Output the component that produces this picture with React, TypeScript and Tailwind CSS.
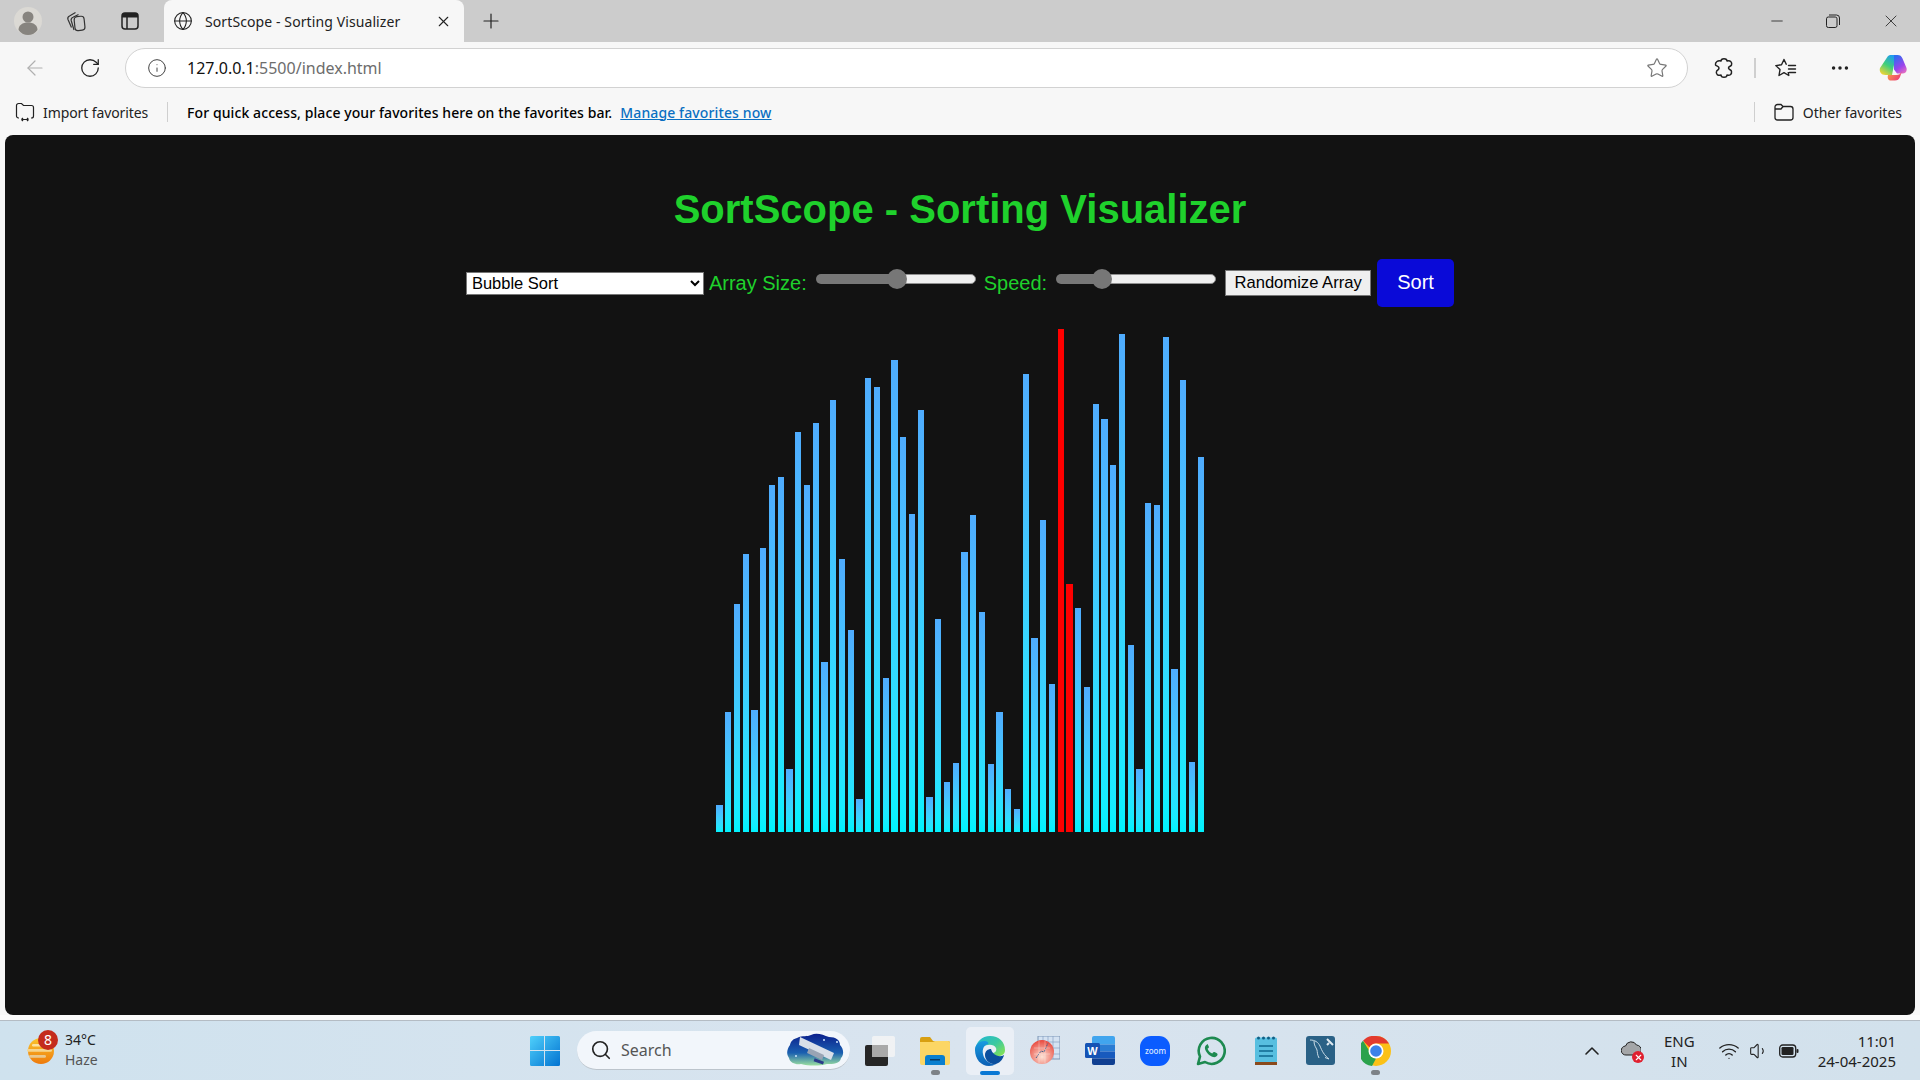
import React from 'react';
import {
  ArrowLeft,
  ChevronUp,
  Ellipsis,
  Globe,
  Info,
  Minus,
  Plus,
  RotateCw,
  Search,
  Star,
  Volume1,
  Wifi,
  X,
} from 'lucide-react';

const chromeFont = { fontFamily: '"Noto Sans", sans-serif' };

// bar heights in px, measured from the baseline
const bars: number[] = [
  27, 120, 228, 278, 122, 284, 347, 355, 63, 400, 347, 409, 170, 432, 273, 202, 33, 454, 445, 154, 472, 395, 318, 422, 35, 213, 50,
  69, 280, 317, 220, 68, 120, 43, 23, 458, 194, 312, 148, 503, 248, 224, 145, 428, 413, 367, 498, 187, 63, 329, 327, 495, 163, 452, 70,
  375,
];
const redBars = [39, 40];

function Slider({ width, fill }: { width: number; fill: number }) {
  return (
    <div className="relative mb-[9px] flex h-[10px] shrink-0 overflow-visible" style={{ width }}>
      <div className="h-full rounded-l-[5px] bg-[#777777]" style={{ width: fill }} />
      <div className="h-full flex-1 rounded-r-[5px] border border-[#8f8f8f] bg-[#efefef]" />
      <div className="absolute top-[-5px] h-[20px] w-[20px] rounded-full bg-[#777777]" style={{ left: fill - 10 }} />
    </div>
  );
}

function Avatar() {
  return (
    <svg width="28" height="28" viewBox="0 0 28 28">
      <circle cx="14" cy="14" r="14" fill="#dbd9d4" />
      <circle cx="14" cy="10" r="5.5" fill="#87847f" />
      <path d="M4.5 23c0-5 4-7.5 9.500-7.500s9.500 2.500 9.500 7.500c-2 3-5.500 5-9.500 5s-7.500-2-9.500-5z" fill="#87847f" />
    </svg>
  );
}

function CollectionsIcon() {
  return (
    <svg width="22" height="22" viewBox="0 0 22 22" fill="none" stroke="#333" strokeWidth="1.200">
      <rect x="9.500" y="6.500" width="10" height="14" rx="3" transform="rotate(-6 14 13)" />
      <path d="M9 20 6.200 10.500c-.4-1.500.3-2.500 1.800-3.200l5.500-2.800" />
      <path d="M6.500 17.500 3 9.500c-.6-1.600 0-2.800 1.500-3.500L10.500 2.500" />
    </svg>
  );
}

function VerticalTabsIcon() {
  return (
    <svg width="20" height="20" viewBox="0 0 20 20" fill="none">
      <rect x="2" y="2" width="16" height="16" rx="3" stroke="#222" strokeWidth="1.500" />
      <path d="M2 5a3 3 0 0 1 3-3h10a3 3 0 0 1 3 3v1.500H2z" fill="#222" />
      <path d="M7 6v12" stroke="#222" strokeWidth="1.500" />
    </svg>
  );
}

function RestoreIcon() {
  return (
    <svg width="14" height="14" viewBox="0 0 14 14" fill="none" stroke="#222" strokeWidth="1">
      <rect x="0.500" y="3" width="10.500" height="10.500" rx="1.800" />
      <path d="M3 1h7.500A3 3 0 0 1 13.500 4v7" />
    </svg>
  );
}

function ExtensionsIcon() {
  return (
    <svg width="20" height="22" viewBox="0 0 20 22" fill="none" stroke="#222" strokeWidth="1.500" strokeLinejoin="round">
      <path d="M7 4c0-3 6-3 6 0 3-1 5.500 1 4.500 4-.5 1.500-3 1-3 3s3 1.500 3 3.500c.5 3-2 4.500-4.500 3.500 0 3-6 3-6 0-3 1-5.500-1-4.500-3.500.5-1.500 2.500-1.500 2.500-3.500S2 9 1.500 8C1 5 4 3 7 4z" />
    </svg>
  );
}

function FavoritesIcon() {
  return (
    <svg width="22" height="20" viewBox="0 0 22 20" fill="none" stroke="#222" strokeWidth="1.400" strokeLinejoin="round">
      <path d="M11.500 6.800 9 1.500 6.500 6.800.8 7.600 5 11.600 4 17.500l5-2.800 4.800 2.800-.6-3.500" />
      <path d="M13.500 7.500h7M13.500 11h7M14.500 14.500h6" strokeLinecap="round" />
    </svg>
  );
}

function CopilotIcon() {
  return (
    <svg width="28" height="27" viewBox="0 0 28 27">
      <defs>
        <linearGradient id="cpA" x1="0.700" y1="0" x2="0.200" y2="1">
          <stop offset="0" stopColor="#1f9cf0" />
          <stop offset="0.5" stopColor="#3fcf7a" />
          <stop offset="1" stopColor="#f6d433" />
        </linearGradient>
        <linearGradient id="cpB" x1="0.300" y1="0" x2="0.800" y2="1">
          <stop offset="0" stopColor="#2f6cf0" />
          <stop offset="0.6" stopColor="#9a44ec" />
          <stop offset="1" stopColor="#e86fc0" />
        </linearGradient>
        <linearGradient id="cpC" x1="0" y1="0" x2="1" y2="0.500">
          <stop offset="0" stopColor="#f9a83f" />
          <stop offset="1" stopColor="#ee3f78" />
        </linearGradient>
      </defs>
      <path d="M8 3.500C9 1.500 10.500 1 12.500 1H17l-4 20H6.500C2 21 0 17.500 1 14z" fill="url(#cpA)" />
      <path d="M15 1h3.500c2.500 0 4 1 5 3.500L27.500 14c.8 3-1 5.500-4 5.500H18l-3-4z" fill="url(#cpB)" />
      <path d="M9 21h8c3 0 4.500-1 6-4l-2 6c-1 2.500-2.500 3.500-5 3.500h-4c-2.500 0-4-2-3-5.500z" fill="url(#cpC)" />
    </svg>
  );
}

function ImportIcon() {
  return (
    <svg width="20" height="20" viewBox="0 0 20 20" fill="none" stroke="#222" strokeWidth="1.200">
      <path d="M4 16H3.500A2 2 0 0 1 1.500 14V3.500A2 2 0 0 1 3.500 1.500h3l2 2H16.500a2 2 0 0 1 2 2V14a2 2 0 0 1-2 2H16" />
      <path d="M6.500 17.500h7M6.500 17.500 8 16M6.500 17.500 8 19M13.500 17.500 12 16M13.500 17.500 12 19" />
    </svg>
  );
}

function FolderOutline() {
  return (
    <svg width="20" height="18" viewBox="0 0 20 18" fill="none" stroke="#222" strokeWidth="1.300">
      <path d="M1 4a2.500 2.500 0 0 1 2.500-2.500H7l2 2h7.500A2.500 2.500 0 0 1 19 6v8.500a2.500 2.500 0 0 1-2.500 2.500h-13A2.500 2.500 0 0 1 1 14.500z" />
      <path d="M1 6h6l2-2.500" />
    </svg>
  );
}

function WeatherIcon() {
  return (
    <svg width="28" height="32" viewBox="0 0 28 32">
      <defs>
        <linearGradient id="sun" x1="0" y1="0" x2="0" y2="1">
          <stop offset="0" stopColor="#fbc52c" />
          <stop offset="1" stopColor="#ee7a0c" />
        </linearGradient>
      </defs>
      <circle cx="15" cy="16" r="13" fill="url(#sun)" />
      <rect x="6" y="9" width="13" height="2.500" rx="1.200" fill="#fbe3a0" />
      <rect x="1" y="14" width="25" height="2.800" rx="1.400" fill="#f5d58f" />
      <rect x="3" y="20" width="17" height="2.800" rx="1.400" fill="#e9c88f" />
    </svg>
  );
}

function WindowsLogo() {
  return (
    <svg width="30" height="30" viewBox="0 0 30 30">
      <defs>
        <linearGradient id="win" x1="0" y1="0" x2="1" y2="1">
          <stop offset="0" stopColor="#4fd0fb" />
          <stop offset="1" stopColor="#0273d1" />
        </linearGradient>
      </defs>
      <path d="M1.500 0H14v14H0V1.500A1.500 1.500 0 0 1 1.500 0zM15 0h13.500A1.500 1.500 0 0 1 30 1.500V14H15zM0 15h14v15H1.500A1.500 1.500 0 0 1 0 28.500zM15 15h15v13.500a1.500 1.500 0 0 1-1.500 1.500H15z" fill="url(#win)" />
    </svg>
  );
}

function SearchArt() {
  return (
    <svg width="60" height="34" viewBox="0 0 60 34">
      <defs>
        <linearGradient id="sky" x1="0" y1="0" x2="0" y2="1">
          <stop offset="0" stopColor="#0b1f8c" />
          <stop offset="0.6" stopColor="#1a5fb0" />
          <stop offset="1" stopColor="#9adfa0" />
        </linearGradient>
      </defs>
      <path d="M10 5c6-3 10-1 14-3 6-3 12 0 18 2 7 0 11 3 11 8 4 4 4 10 1 13-1 6-8 6-14 6-8 2-18 2-26 0-5 1-11-1-12-6-3-4-2-9 1-13 1-4 3-6 7-7z" fill="url(#sky)" />
      <path d="M13 4l34 16-3 7L12 12z" fill="#d8dfe8" />
      <path d="M22 15l15 7-2 5-15-7z" fill="#99a4b4" />
      <rect x="27" y="27" width="10" height="3" fill="#2a3a8a" transform="rotate(20 32 28)" />
      <circle cx="37" cy="7" r="1" fill="#cfe6ff" />
      <circle cx="50" cy="9" r="1" fill="#cfe6ff" />
      <circle cx="9" cy="23" r="1" fill="#cfe6ff" />
    </svg>
  );
}

function TaskViewIcon() {
  return (
    <svg width="30" height="30" viewBox="0 0 30 30">
      <rect x="0" y="9" width="23" height="21" rx="2" fill="#262626" />
      <rect x="7" y="0" width="23" height="21" rx="2" fill="#f4f4f4" opacity="0.85" />
      <rect x="7" y="9" width="16" height="12" fill="#a9a9a9" />
    </svg>
  );
}

function FolderIcon() {
  return (
    <svg width="30" height="28" viewBox="0 0 30 28">
      <path d="M0 2a2 2 0 0 1 2-2h8l3 4h15a2 2 0 0 1 2 2v4H0z" fill="#d89f12" />
      <path d="M0 5h13l2-1h13a2 2 0 0 1 2 2v20a2 2 0 0 1-2 2H2a2 2 0 0 1-2-2z" fill="#fcd665" />
      <path d="M5 28v-7a3 3 0 0 1 3-3h14a3 3 0 0 1 3 3v7z" fill="#0a7fcf" />
      <rect x="10" y="22" width="10" height="1.500" fill="#073a66" />
    </svg>
  );
}

function EdgeIcon() {
  return (
    <svg width="30" height="30" viewBox="0 0 30 30">
      <defs>
        <linearGradient id="edgeA" x1="0" y1="0" x2="1" y2="0.800">
          <stop offset="0" stopColor="#1fb6d8" />
          <stop offset="0.6" stopColor="#3bc9a0" />
          <stop offset="1" stopColor="#7fe05a" />
        </linearGradient>
        <linearGradient id="edgeB" x1="0" y1="0" x2="0" y2="1">
          <stop offset="0" stopColor="#1a9ce0" />
          <stop offset="1" stopColor="#0b5fb5" />
        </linearGradient>
      </defs>
      <path d="M15 0c9 0 15 6 15 14 0 4-3 6-7 6-3 0-6-1-6-3 3 0 5-2 4-5-2-4-9-4-13-1C4 14 1 17 0 14 1 6 7 0 15 0z" fill="url(#edgeA)" />
      <path d="M0 14c0-5 4-9 9-9 4 0 5 2 4 3-4 1-6 5-5 10 1 6 7 11 13 10-2 1-4 2-7 2C6 30 0 23 0 14z" fill="url(#edgeB)" />
      <path d="M10 19c0-4 3-6 6-6 1 4 5 8 11 7l2-1c-1 5-6 10-11 9-5-1-8-5-8-9z" fill="#0b4f9e" />
    </svg>
  );
}

function OriginIcon() {
  return (
    <svg width="30" height="30" viewBox="0 0 30 30">
      <defs>
        <radialGradient id="orig" cx="0.500" cy="0.700" r="0.700">
          <stop offset="0" stopColor="#fde3d6" />
          <stop offset="1" stopColor="#e8473c" />
        </radialGradient>
      </defs>
      <rect x="8" y="0" width="22" height="23" fill="#d4e2f2" stroke="#7d95b5" />
      <path d="M13 0v23M18 0v23M23 0v23M8 6h22M8 12h22M8 18h22" stroke="#88a2c4" strokeWidth="0.700" />
      <circle cx="12" cy="16" r="12" fill="url(#orig)" />
      <path d="M6 22 11 15l3 1 4-9" stroke="#44608c" strokeWidth="1" fill="none" strokeDasharray="2 1" />
      <path d="M4 12h16M4 18h16M9 5v22M15 5v22" stroke="#fff" strokeWidth="0.500" opacity="0.600" />
    </svg>
  );
}

function WordIcon() {
  return (
    <svg width="30" height="30" viewBox="0 0 30 30">
      <path d="M7 2a2 2 0 0 1 2-2h19a2 2 0 0 1 2 2v6.500H7z" fill="#41a5ee" />
      <rect x="7" y="8.500" width="23" height="7" fill="#2b7cd3" />
      <rect x="7" y="15.500" width="23" height="7" fill="#185abd" />
      <path d="M7 22.500h23V27a2 2 0 0 1-2 2H9a2 2 0 0 1-2-2z" fill="#103f91" />
      <rect x="0" y="7" width="15" height="15" rx="1.500" fill="#1553b4" />
      <text x="7.500" y="18.500" fill="#fff" textAnchor="middle" fontSize="11" fontWeight="700" fontFamily="Liberation Sans, sans-serif">
        W
      </text>
    </svg>
  );
}

function ZoomIcon() {
  return (
    <div className="flex h-[30px] w-[30px] items-center justify-center rounded-[11px] bg-[#0b5cff] text-[8px] font-medium text-[#dce8ff]" style={chromeFont}>
      zoom
    </div>
  );
}

function WhatsappIcon() {
  return (
    <svg width="30" height="30" viewBox="0 0 30 30" fill="none">
      <path d="M2 28l2-7.500A13 13 0 1 1 9 26z" stroke="#1d8a50" strokeWidth="2.600" strokeLinejoin="round" />
      <path d="M11 8.500c-1.500.5-2.500 2.500-2 4.500 1 3.500 4.500 7 8 8 2 .5 4-.5 4.500-2 .2-1-.2-1.500-1-2l-2-1c-.7-.3-1.200 0-1.500.5l-.7 1c-2-.7-4-2.700-4.800-4.800l1-.7c.5-.4.600-.9.300-1.500l-1-2c-.3-.6-.6-.7-.8-.5z" fill="#1d8a50" />
    </svg>
  );
}

function NotepadIcon() {
  return (
    <svg width="24" height="30" viewBox="0 0 24 30">
      <rect x="1" y="1.500" width="22" height="25" rx="1.500" fill="#58bfe0" />
      <rect x="1" y="26" width="22" height="3" fill="#8a4a1c" />
      <circle cx="4.500" cy="2" r="1.500" fill="#0f5f85" />
      <circle cx="9.500" cy="2" r="1.500" fill="#0f5f85" />
      <circle cx="14.500" cy="2" r="1.500" fill="#0f5f85" />
      <circle cx="19.500" cy="2" r="1.500" fill="#0f5f85" />
      <path d="M5 10h14M5 15h14M5 20h14" stroke="#0f6a90" strokeWidth="1.600" />
    </svg>
  );
}

function MysqlIcon() {
  return (
    <svg width="30" height="30" viewBox="0 0 30 30">
      <rect width="29" height="29" rx="3" fill="#2a6186" />
      <path d="M4 4c5 0 8 2 10 6 2 5 4 9 9 13l-4-1.500M8 5c0 5 2 6 3 9 .5 2 0 4 2 8" fill="none" stroke="#c9dbe6" strokeWidth="1" />
      <path d="M21 3l6 6M23 7l-2 2" stroke="#dfe9f0" strokeWidth="2" />
    </svg>
  );
}

function ChromeIcon() {
  return (
    <svg width="30" height="30" viewBox="0 0 30 30">
      <circle cx="15" cy="15" r="15" fill="#fbc116" />
      <path d="M15 0a15 15 0 0 1 13 7.500H15a7.500 7.500 0 0 0-6.500 3.800L2 4.700A15 15 0 0 1 15 0z" fill="#e33b2e" />
      <path d="M2 4.700l6.500 10.500a7.500 7.500 0 0 0 6.500 7.300L11 30A15 15 0 0 1 2 4.700z" fill="#2ba24c" />
      <circle cx="15" cy="15" r="7.500" fill="#fff" />
      <circle cx="15" cy="15" r="5.800" fill="#3b82e8" />
    </svg>
  );
}

function CloudError() {
  return (
    <div className="relative h-[22px] w-[22px]">
      <svg width="20" height="16" viewBox="0 0 20 16" className="mt-[1px]">
        <path d="M5 15a4.500 4.500 0 0 1-.5-9A6 6 0 0 1 15.500 5 5 5 0 0 1 15 15z" fill="#a4a6a8" stroke="#222" strokeWidth="1" />
      </svg>
      <div className="absolute bottom-[-1px] right-[-1px] flex h-[12px] w-[12px] items-center justify-center rounded-full bg-[#e0202f]">
        <X size={9} color="#fff" strokeWidth={3} />
      </div>
    </div>
  );
}

function BatteryIcon() {
  return (
    <svg width="20" height="14" viewBox="0 0 20 14" fill="none">
      <rect x="0.700" y="1" width="16" height="12" rx="3" stroke="#222" strokeWidth="1.300" />
      <rect x="2.500" y="3" width="12" height="8" rx="1.200" fill="#222" />
      <rect x="17.500" y="5" width="2" height="4" rx="1" fill="#222" />
    </svg>
  );
}

function TaskbarIcon({ children, dot, active }: { children: React.ReactNode; dot?: boolean; active?: boolean }) {
  return (
    <div className={`relative flex h-[48px] w-[48px] items-center justify-center rounded-[5px] ${active ? 'bg-[#eaeff6]' : ''}`}>
      {children}
      {dot && <div className="absolute bottom-0 h-[5px] w-[9px] rounded-full bg-[#7d8287]" />}
      {active && <div className="absolute bottom-0 h-[4px] w-[20px] rounded-full bg-[#0a78d4]" />}
    </div>
  );
}

export default function App() {
  return (
    <div className="flex h-[1080px] w-[1920px] flex-col overflow-hidden bg-[#f7f7f7] text-[#111]" style={chromeFont}>
      {/* tab strip */}
      <div className="flex h-[42px] shrink-0 items-center bg-[#cccccc]">
        <div className="ml-[14px]">
          <Avatar />
        </div>
        <div className="ml-[23px]">
          <CollectionsIcon />
        </div>
        <div className="ml-[33px]">
          <VerticalTabsIcon />
        </div>
        <div className="ml-[24px] flex h-[42px] w-[300px] items-center self-end rounded-t-[8px] bg-[#f7f7f7] pl-[9px]">
          <Globe size={20} strokeWidth={1.300} color="#222" />
          <span className="ml-[12px] whitespace-nowrap text-[14px] tracking-[0.100px] text-[#222]">SortScope - Sorting Visualizer</span>
          <X size={17} strokeWidth={1.500} color="#222" className="ml-auto mr-[12px]" />
        </div>
        <Plus size={24} strokeWidth={1.200} color="#222" className="ml-[15px]" />
        <div className="ml-auto flex items-center">
          <Minus size={18} strokeWidth={1.100} color="#222" className="mr-[40px]" />
          <div className="mr-[41px]">
            <RestoreIcon />
          </div>
          <X size={20} strokeWidth={1} color="#222" className="mr-[19px]" />
        </div>
      </div>

      {/* address bar */}
      <div className="flex h-[48px] shrink-0 items-center pt-[3px]">
        <ArrowLeft size={24} strokeWidth={1.200} color="#b0b0b0" className="ml-[23px]" />
        <RotateCw size={22} strokeWidth={1.400} color="#222" className="ml-[32px]" />
        <div className="ml-[24px] flex h-[40px] w-[1563px] items-center rounded-full border border-[#d2d2d2] bg-white pl-[21px]">
          <Info size={20} strokeWidth={1.200} color="#444" />
          <span className="ml-[20px] text-[16px] text-[#111]">
            127.0.0.1<span className="text-[#6d6d6d]">:5500/index.html</span>
          </span>
          <Star size={22} strokeWidth={1.300} color="#777" className="ml-auto mr-[19px]" />
        </div>
        <div className="ml-[26px]">
          <ExtensionsIcon />
        </div>
        <div className="ml-[20px] h-[20px] w-[2px] bg-[#cfcfcf]" />
        <div className="ml-[19px]">
          <FavoritesIcon />
        </div>
        <Ellipsis size={22} strokeWidth={1.800} color="#222" className="ml-[32px]" />
        <div className="ml-[28px]">
          <CopilotIcon />
        </div>
      </div>

      {/* favorites bar */}
      <div className="flex h-[45px] shrink-0 items-center pb-[1px] text-[14px]">
        <div className="ml-[15px]">
          <ImportIcon />
        </div>
        <span className="ml-[8px] tracking-[-0.100px] text-[#222]">Import favorites</span>
        <div className="ml-[19px] h-[20px] w-px bg-[#cfcfcf]" />
        <span className="ml-[19px] font-medium tracking-[0.090px] text-black">For quick access, place your favorites here on the favorites bar.</span>
        <a href="#" className="ml-[8px] font-medium tracking-[0.120px] text-[#0a6fc2] underline">
          Manage favorites now
        </a>
        <div className="ml-auto h-[20px] w-px bg-[#cfcfcf]" />
        <div className="ml-[19px]">
          <FolderOutline />
        </div>
        <span className="ml-[9px] mr-[18px] text-[#222]">Other favorites</span>
      </div>

      {/* page */}
      <div className="mx-[5px] flex h-[880px] shrink-0 flex-col items-center rounded-[8px] bg-[#121212] pt-[51px]" style={{ fontFamily: '"Liberation Sans", Arial, sans-serif' }}>
        <h1 className="text-[40px] font-bold leading-[46px] text-[#1fd12c]">SortScope - Sorting Visualizer</h1>
        <div className="mt-[27px] flex h-[48px] items-center text-[20px] text-[#1fd12c]">
          <select defaultValue="Bubble Sort" className="h-[23px] w-[238px] border border-[#767676] bg-white pl-[1px] text-[16.500px] text-black">
            <option>Bubble Sort</option>
            <option>Selection Sort</option>
            <option>Insertion Sort</option>
            <option>Merge Sort</option>
            <option>Quick Sort</option>
          </select>
          <label className="ml-[5px]">Array Size:</label>
          <div className="ml-[9px]">
            <Slider width={160} fill={81} />
          </div>
          <label className="ml-[8px]">Speed:</label>
          <div className="ml-[9px]">
            <Slider width={160} fill={46} />
          </div>
          <button className="ml-[9px] h-[26px] w-[146px] border border-[#767676] bg-[#efefef] text-[16.600px] text-black">Randomize Array</button>
          <button className="ml-[6px] h-[48px] w-[77px] rounded-[5px] bg-[#0a0ad8] pb-[2px] text-[20px] text-white">Sort</button>
        </div>
        <div className="mt-[22px] flex h-[503px] items-end justify-center">
          {bars.map((height, index) => (
            <div
              key={index}
              className={`mx-[1.250px] w-[6.250px] ${redBars.includes(index) ? 'bg-[#ff0000]' : 'bg-linear-to-t from-[#00f2fe] to-[#4facfe]'}`}
              style={{ height }}
            />
          ))}
        </div>
      </div>

      <div className="h-[5px] shrink-0 bg-[#fbfbfb]" />

      {/* taskbar */}
      <div className="flex h-[60px] shrink-0 items-center border-t border-[#b4bcc4] bg-linear-to-r from-[#cfe2ee] via-[#d9e4ef] to-[#d2e1ec]">
        <div className="relative ml-[26px] flex w-[504px] items-center">
          <WeatherIcon />
          <div className="absolute left-[12px] top-[-2px] flex h-[20px] w-[20px] items-center justify-center rounded-full bg-[#c42b1c] text-[14px] text-white">8</div>
          <div className="ml-[11px] -mt-[2px] text-[14px] leading-[20px] text-[#222]">
            <div>34°C</div>
            <div className="text-[#555]">Haze</div>
          </div>
        </div>
        <WindowsLogo />
        <div className="ml-[17px] flex h-[39px] w-[273px] items-center rounded-full border-b border-[#bcc4cc] bg-[#f2f6fb] pl-[13px]">
          <Search size={22} strokeWidth={1.800} color="#222" />
          <span className="ml-[9px] text-[16px] text-[#555]">Search</span>
          <div className="ml-auto mr-[3px]">
            <SearchArt />
          </div>
        </div>
        <div className="ml-[6px] flex items-center gap-[7.100px]">
          <TaskbarIcon>
            <TaskViewIcon />
          </TaskbarIcon>
          <TaskbarIcon dot>
            <FolderIcon />
          </TaskbarIcon>
          <TaskbarIcon active>
            <EdgeIcon />
          </TaskbarIcon>
          <TaskbarIcon>
            <OriginIcon />
          </TaskbarIcon>
          <TaskbarIcon>
            <WordIcon />
          </TaskbarIcon>
          <TaskbarIcon>
            <ZoomIcon />
          </TaskbarIcon>
          <TaskbarIcon>
            <WhatsappIcon />
          </TaskbarIcon>
          <TaskbarIcon>
            <NotepadIcon />
          </TaskbarIcon>
          <TaskbarIcon>
            <MysqlIcon />
          </TaskbarIcon>
          <TaskbarIcon dot>
            <ChromeIcon />
          </TaskbarIcon>
        </div>
        <div className="ml-auto flex items-center text-[#222]">
          <ChevronUp size={24} strokeWidth={1.600} color="#222" />
          <div className="ml-[17px]">
            <CloudError />
          </div>
          <div className="ml-[21px] text-center text-[15px] leading-[20px]">
            <div>ENG</div>
            <div>IN</div>
          </div>
          <Wifi size={22} strokeWidth={1.500} color="#222" className="ml-[23px]" />
          <Volume1 size={20} strokeWidth={1.300} color="#222" className="ml-[9px]" />
          <div className="ml-[10px]">
            <BatteryIcon />
          </div>
          <div className="ml-[19px] mr-[24px] text-right text-[15px] leading-[20px]">
            <div>11:01</div>
            <div>24-04-2025</div>
          </div>
        </div>
      </div>
    </div>
  );
}
